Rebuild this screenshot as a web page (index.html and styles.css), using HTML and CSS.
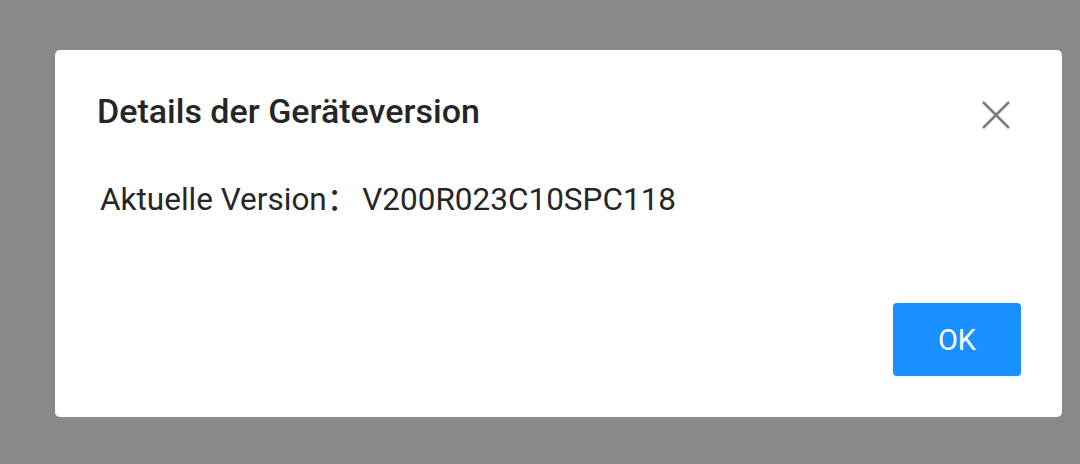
FILE: index.html
```html
<!DOCTYPE html>
<html lang="de">
<head>
  <meta charset="UTF-8" />
  <meta name="viewport" content="width=device-width, initial-scale=1.0" />
  <title>Details der Geräteversion</title>
  <link rel="stylesheet" href="styles.css">
</head>
<body>

  <div class="dialog">
    <div class="dialog-header">
      <h2 class="dialog-title">Details der Geräteversion</h2>
      <button class="close" aria-label="Schließen">
        <svg width="28" height="28" viewBox="0 0 28 28">
          <path d="M1 1 L27 27 M27 1 L1 27" stroke="#7d7d7d" stroke-width="2.6" fill="none" />
        </svg>
      </button>
    </div>

    <div class="dialog-body">
      <span class="label">Aktuelle Version：</span><span class="value">V200R023C10SPC118</span>
    </div>

    <div class="dialog-footer">
      <button class="ok">OK</button>
    </div>
  </div>

</body>
</html>
```

FILE: styles.css
```css
* { box-sizing: border-box; }
body {
  font-family: Roboto, 'Noto Sans CJK SC', sans-serif;
  background-color: #898989;
  margin: 0;
  padding: 50px 0 0 55px;
  color: #262626;
}
.dialog {
  width: 1007px;
  height: 367px;
  background-color: #fff;
  border-radius: 5px;
  display: flex;
  flex-direction: column;
}
.dialog-header {
  display: flex;
  justify-content: space-between;
  align-items: center;
  padding: 38px 52px 0 42px;
}
.dialog-title {
  margin: 0;
  font-size: 34px;
  font-weight: 500;
  line-height: 46px;
}
.close {
  border: none;
  background: none;
  padding: 0;
  margin-top: 8px;
  width: 28px;
  height: 28px;
  cursor: pointer;
}
.dialog-body {
  padding: 46px 45px 0;
  font-size: 31.5px;
  line-height: 40px;
}
.value { margin-left: 4px; }
.dialog-footer {
  margin-top: auto;
  display: flex;
  justify-content: flex-end;
  padding: 0 41px 41px;
}
.ok {
  width: 128px;
  height: 73px;
  border: none;
  border-radius: 4px;
  background-color: #1890ff;
  color: #fff;
  font-family: inherit;
  font-size: 29px;
  box-shadow: 0 2px 0 rgba(24, 144, 255, 0.08);
  cursor: pointer;
}
```
